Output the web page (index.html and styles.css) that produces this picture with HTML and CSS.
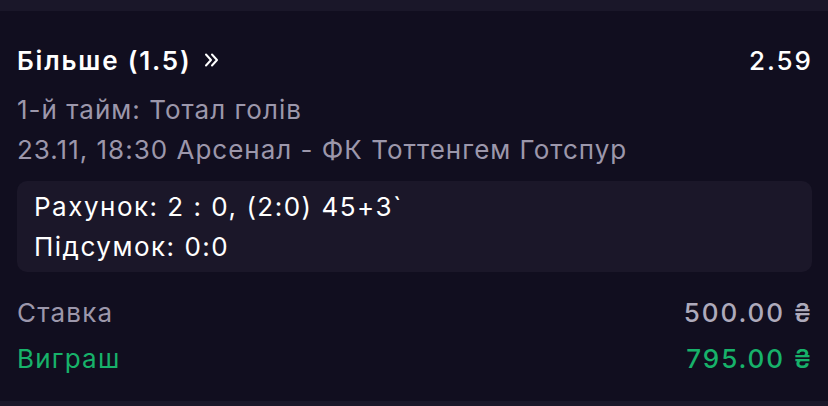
FILE: index.html
```html
<!DOCTYPE html>
<html lang="uk">
<head>
<meta charset="utf-8">
<link rel="stylesheet" href="styles.css">
</head>
<body>
<div class="topband"></div>
<main class="card">
  <div class="head">
    <div class="title">Більше (1.5) <span class="chev">
      <svg width="15" height="16" viewBox="0 0 15 16"><path d="M2 2.5 L7 8 L2 13.5 M8 2.5 L13 8 L8 13.5" fill="none" stroke="#fff" stroke-width="2" stroke-linecap="round" stroke-linejoin="round"/></svg>
    </span></div>
    <div class="odds">2.59</div>
  </div>
  <div class="sub first">1-й тайм: Тотал голів</div>
  <div class="sub">23.11, 18:30 Арсенал - ФК Тоттенгем Готспур</div>
  <div class="score">
    <div class="line">Рахунок: 2 : 0, (2:0) 45+3`</div>
    <div class="line">Підсумок: 0:0</div>
  </div>
  <div class="row stake"><span>Ставка</span><span class="amt">500.00 ₴</span></div>
  <div class="row win"><span>Виграш</span><span class="amt">795.00 ₴</span></div>
</main>
<div class="bottomband"></div>
</body>
</html>
```
FILE: styles.css
```css
html, body {
  margin: 0;
  padding: 0;
  background: #110e1f;
  height: 406px;
  overflow: hidden;
}
body {
  font-family: Inter, "Noto Sans", sans-serif;
  display: flex;
  flex-direction: column;
  letter-spacing: 1px;
}
.topband {
  height: 11px;
  background: #1a1729;
}
.card {
  padding: 29px 16px 0 17px;
  flex: 1;
}
.head {
  display: flex;
  justify-content: space-between;
  align-items: center;
  height: 40px;
}
.title {
  color: #fff;
  font-weight: 600;
  font-size: 26px;
  letter-spacing: 1.8px;
  display: flex;
  align-items: center;
  gap: 13px;
}
.chev { display: flex; }
.odds {
  color: #fff;
  font-size: 26px;
  font-weight: 500;
  letter-spacing: 2px;
  margin-right: -1px;
}
.sub {
  color: #9c97ab;
  font-size: 26px;
  line-height: 40px;
  letter-spacing: 1px;
}
.sub.first { margin-top: 10px; }
.score {
  margin-top: 11px;
  background: #1b1729;
  border-radius: 10px;
  padding: 6px 17px 5px 17px;
}
.line {
  color: #fff;
  font-size: 26px;
  line-height: 40px;
  letter-spacing: 1.5px;
}
.row {
  display: flex;
  justify-content: space-between;
  font-size: 26px;
  line-height: 46px;
  letter-spacing: 1.2px;
}
.stake { margin-top: 18px; color: #9c97ab; }
.stake .amt { color: #aeaabb; }
.win { color: #17b26a; }
.amt { font-size: 26px; font-weight: 500; letter-spacing: 1.9px; margin-right: -1px; }
.bottomband {
  height: 5px;
  background: #1a1729;
}
```
